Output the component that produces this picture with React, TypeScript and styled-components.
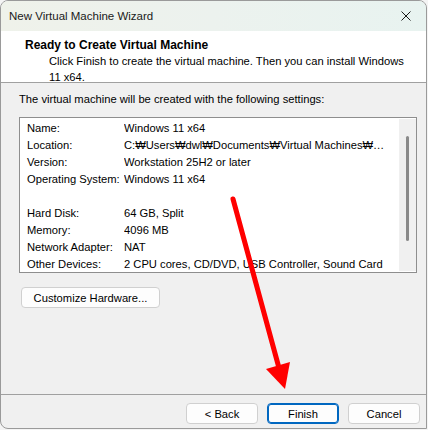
import React from 'react';
import styled, { createGlobalStyle } from 'styled-components';

const GlobalStyle = createGlobalStyle`
  html, body { margin: 0; padding: 0; background: #f4f4f4; }
  body { font-family: "Liberation Sans", Arial, sans-serif; font-size: 11.2px; color: #000; }
`;

const settings: [string, string][] = [
    ['Name:', 'Windows 11 x64'],
    ['Location:', 'C:₩Users₩dwl₩Documents₩Virtual Machines₩Windows 11 x64'],
    ['Version:', 'Workstation 25H2 or later'],
    ['Operating System:', 'Windows 11 x64'],
    ['', ''],
    ['Hard Disk:', '64 GB, Split'],
    ['Memory:', '4096 MB'],
    ['Network Adapter:', 'NAT'],
    ['Other Devices:', '2 CPU cores, CD/DVD, USB Controller, Sound Card'],
];

const App = () => {
    return (
        <>
            <GlobalStyle />
            <Window>
                <TitleBar>
                    <span>New Virtual Machine Wizard</span>
                    <CloseIcon viewBox="0 0 10 10">
                        <path d="M0.5 0.5 L9.5 9.5 M9.5 0.5 L0.5 9.5" stroke="#1a1a1a" strokeWidth="1" />
                    </CloseIcon>
                </TitleBar>

                <Header>
                    <HeaderTitle>Ready to Create Virtual Machine</HeaderTitle>
                    <HeaderText>
                        Click Finish to create the virtual machine. Then you can install Windows
                        <br />
                        11 x64.
                    </HeaderText>
                </Header>

                <Body>
                    <Intro>The virtual machine will be created with the following settings:</Intro>
                    <SettingsBox>
                        <SettingsList>
                            {settings.map(([label, value], i) => (
                                <SettingRow key={i}>
                                    <Label>{label}</Label>
                                    <Value>{value}</Value>
                                </SettingRow>
                            ))}
                        </SettingsList>
                        <ScrollTrack>
                            <ScrollThumb />
                        </ScrollTrack>
                    </SettingsBox>
                    <CustomizeButton $width={139}>Customize Hardware...</CustomizeButton>
                </Body>

                <Footer>
                    <Button $width={72}>&lt; Back</Button>
                    <Button $width={72} $primary>Finish</Button>
                    <Button $width={72}>Cancel</Button>
                </Footer>

                {/* red annotation arrow drawn over the dialog */}
                <Arrow viewBox="0 0 428 430">
                    <line x1="233" y1="199" x2="279" y2="368" stroke="#ff0000" strokeWidth="5" strokeLinecap="round" />
                    <polygon points="266,369 290,362 285,389" fill="#ff0000" />
                </Arrow>
            </Window>
        </>
    );
};

const Window = styled.div`
  position: relative;
  box-sizing: border-box;
  width: 427px;
  height: 429px;
  display: flex;
  flex-direction: column;
  background: #f0f0f0;
  border: 1px solid #9a9a9a;
  border-radius: 8px 8px 0 8px;
  overflow: hidden;
`;

const TitleBar = styled.div`
  height: 30px;
  flex-shrink: 0;
  display: flex;
  align-items: center;
  justify-content: space-between;
  padding: 0 10px 0 8px;
  background: linear-gradient(90deg, #eff2ea 0%, #ecf2ee 50%, #e8f3f0 100%);
  font-size: 11.5px;
  color: #1a1a1a;
`;

const CloseIcon = styled.svg`
  width: 10px;
  height: 10px;
  margin-right: 5px;
`;

const Header = styled.div`
  height: 52px;
  flex-shrink: 0;
  box-sizing: border-box;
  background: #fff;
  border-bottom: 1px solid #a0a0a0;
  padding: 6px 0 0 24px;
`;

const HeaderTitle = styled.div`
  font-weight: bold;
  font-size: 12px;
  line-height: 16px;
`;

const HeaderText = styled.div`
  padding-left: 24px;
  line-height: 16px;
  white-space: nowrap;
`;

const Body = styled.div`
  flex: 1;
  display: flex;
  flex-direction: column;
  align-items: flex-start;
  padding: 8px 0 0 18px;
  border-bottom: 1px solid #a0a0a0;
`;

const Intro = styled.div`
  line-height: 16px;
  margin-bottom: 10px;
`;

const SettingsBox = styled.div`
  box-sizing: border-box;
  width: 398px;
  height: 156px;
  display: flex;
  background: #fff;
  border: 1px solid #8e8e8e;
  margin-bottom: 14px;
`;

const SettingsList = styled.div`
  flex: 1;
  min-width: 0;
  padding: 2px 0 0 7px;
`;

const SettingRow = styled.div`
  display: flex;
  height: 17px;
  line-height: 17px;
`;

const Label = styled.span`
  width: 97px;
  flex-shrink: 0;
  white-space: nowrap;
`;

const Value = styled.span`
  width: 265px;
  white-space: nowrap;
  overflow: hidden;
  text-overflow: ellipsis;
`;

const ScrollTrack = styled.div`
  width: 17px;
  margin: 1px 0;
  background: #f0f0f0;
  display: flex;
  justify-content: center;
  padding-top: 17px;
  box-sizing: border-box;
`;

const ScrollThumb = styled.div`
  width: 3px;
  height: 105px;
  border-radius: 2px;
  background: #8a8a8a;
`;

const Button = styled.button<{ $width: number; $primary?: boolean }>`
  box-sizing: border-box;
  width: ${p => p.$width}px;
  height: 21px;
  padding: 0;
  font-family: inherit;
  font-size: 11.2px;
  color: #000;
  background: #fdfdfd;
  border: 1px solid ${p => (p.$primary ? '#0067c0' : '#d0d0d0')};
  border-radius: 4px;
  ${p => p.$primary && 'box-shadow: inset 0 0 0 1px #0067c0;'}
`;

const CustomizeButton = styled(Button)`
  margin-left: 2px;
`;

const Footer = styled.div`
  height: 33px;
  flex-shrink: 0;
  display: flex;
  justify-content: flex-end;
  align-items: flex-start;
  gap: 9px;
  padding: 8px 6px 0 0;
  box-sizing: border-box;
`;

const Arrow = styled.svg`
  position: absolute;
  left: -1px;
  top: -1px;
  width: 428px;
  height: 430px;
  pointer-events: none;
`;

export default App;
